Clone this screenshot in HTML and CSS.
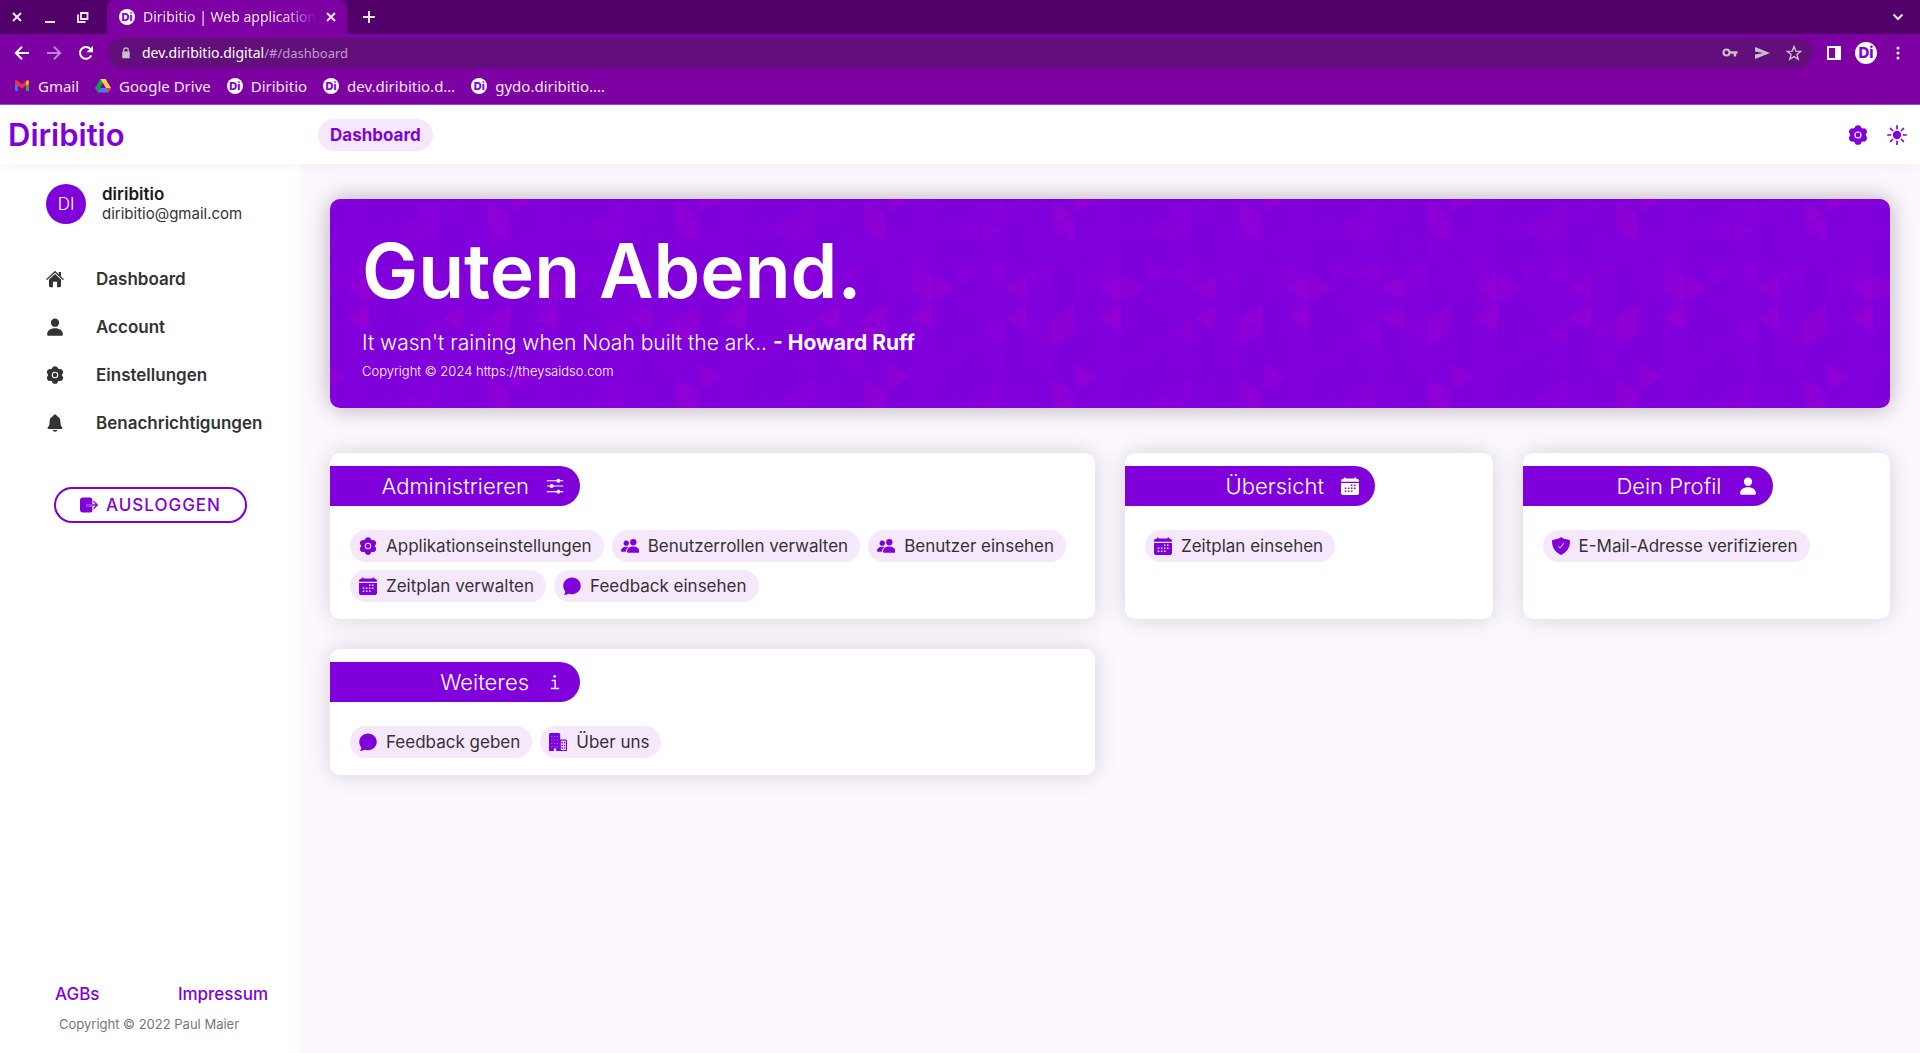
FILE: index.html
```html
<!DOCTYPE html>
<html lang="de">
<head>
<meta charset="utf-8">
<meta name="viewport" content="width=device-width, initial-scale=1">
<title>Diribitio | Web application</title>
<link rel="stylesheet" href="styles.css">
</head>
<body>
<svg class="sprite" aria-hidden="true">
  <symbol id="i-gear" viewBox="0 0 24 24">
    <circle cx="12" cy="12" r="9.6" fill="currentColor"/>
    <g stroke="currentColor" stroke-width="7.6" stroke-linecap="round" stroke-linejoin="round">
      <path d="M12 4v16M5.100 8l13.800 8M18.900 8L5.100 16"/>
    </g>
    <circle cx="12" cy="12" r="3.600" fill="none" stroke="var(--hole)" stroke-width="1.400"/>
  </symbol>
  <symbol id="i-sun" viewBox="0 0 24 24">
    <circle cx="12" cy="12" r="5" fill="currentColor"/>
    <path d="M12 1v3.4M12 19.6V23M1 12h3.4M19.600 12H23M4.200 4.200l2.400 2.400M17.400 17.400l2.400 2.400M4.200 19.800l2.400-2.400M17.400 6.600l2.400-2.400" stroke="currentColor" stroke-width="2" stroke-linecap="round"/>
  </symbol>
  <symbol id="i-home" viewBox="0 0 24 24">
    <path d="M1.300 12.300L12 2.300l10.700 10" fill="none" stroke="currentColor" stroke-width="1.700" stroke-linecap="round"/>
    <path d="M17 2.500h3v6.200l-3-2.800zM4 12.700l8-7.500 8 7.500V21a2 2 0 0 1-2 2h-3.200v-7.500H9.200V23H6a2 2 0 0 1-2-2z" fill="currentColor"/>
  </symbol>
  <symbol id="i-person" viewBox="0 0 24 24">
    <circle cx="12" cy="6.300" r="5.500" fill="currentColor"/>
    <path d="M1.500 21.500c0-5 4.500-8 10.500-8s10.500 3 10.500 8c0 1.300-.6 2-2 2h-17c-1.400 0-2-.7-2-2z" fill="currentColor"/>
  </symbol>
  <symbol id="i-bell" viewBox="0 0 24 24">
    <path d="M12 .8c1.400 0 2.300.8 2.600 2 3 1.200 4.600 4 4.600 7.200 0 4.400.6 5.600 2.300 7.600.8 1 .4 2.300-1 2.300h-17c-1.400 0-1.800-1.300-1-2.300 1.700-2 2.300-3.200 2.300-7.600 0-3.200 1.600-6 4.600-7.200.3-1.200 1.200-2 2.600-2zM8.800 21.300h6.400c-.4 1.400-1.600 2.200-3.200 2.200s-2.800-.8-3.200-2.200z" fill="currentColor"/>
  </symbol>
  <symbol id="i-logout" viewBox="0 0 24 24">
    <path d="M4 2h9a3.500 3.500 0 0 1 3.500 3.500v5H8v3h8.500v5A3.500 3.500 0 0 1 13 22H4a4 4 0 0 1-4-4V6a4 4 0 0 1 4-4z" fill="currentColor"/>
    <path d="M8 12h15M18.500 7.500L23 12l-4.500 4.500" fill="none" stroke="currentColor" stroke-width="1.800" stroke-linecap="round" stroke-linejoin="round"/>
  </symbol>
  <symbol id="i-sliders" viewBox="0 0 24 24">
    <path d="M1 5h22M1 12h22M1 19.500h22" stroke="currentColor" stroke-width="1.400"/>
    <g fill="currentColor"><circle cx="16.500" cy="5" r="2.600"/><circle cx="7.500" cy="12" r="2.600"/><circle cx="16.500" cy="19.500" r="2.600"/></g>
  </symbol>
  <symbol id="i-calendar" viewBox="0 0 24 24">
    <path d="M0 6.300V5.500C0 3.200 1.500 2 4 2V.7h2V2h12V.7h2V2c2.500 0 4 1.200 4 3.500v.8zM0 8h24v12.500c0 2.300-1.200 3.500-3.500 3.500h-17C1.200 24 0 22.800 0 20.500z" fill="currentColor"/>
    <g fill="var(--hole)"><path d="M13.300 10h2v2h-2zM17.300 10h2v2h-2zM5 14h2v2H5zM9.200 14h2v2h-2zM13.300 14h2v2h-2zM17.300 14h2v2h-2zM5 18h2v2H5zM9.200 18h2v2h-2zM13.300 18h2v2h-2z"/></g>
  </symbol>
  <symbol id="i-people" viewBox="0 0 24 24">
    <g fill="currentColor"><circle cx="16.400" cy="7" r="4.200"/><path d="M8 19.800c0-4.500 3.600-7 8.300-7s8.300 2.500 8.300 7c0 .8-.4 1.200-1.200 1.200H9.200c-.8 0-1.200-.4-1.200-1.200z"/><circle cx="7" cy="8.300" r="3.500"/><path d="M0 18.800c0-3.700 2.700-5.800 6.700-5.800 1.500 0 2.700.2 3.600.8-2.200 1.400-3.700 3.200-3.900 6H1c-.7 0-1-.3-1-1z"/></g>
  </symbol>
  <symbol id="i-chat" viewBox="0 0 24 24">
    <path d="M12 .5C5.500.5.300 5.500.300 11.700c0 3 1 5.300 2.600 7.200.3 1.600-.2 3-1.200 4-.3.500 0 1 .6 1 2 0 3.600-.5 5-1.500 1.500.4 3 .6 4.700.6 6.500 0 11.700-5 11.700-11.300S18.500.5 12 .5z" fill="currentColor"/>
  </symbol>
  <symbol id="i-shield" viewBox="0 0 24 24">
    <path d="M12 0c2 1.800 5.500 3.200 10 3.600 1.300.1 2 .7 2 2C24 14 20 20 12 24 4 20 0 14 0 5.600c0-1.300.7-1.900 2-2C6.500 3.200 10 1.800 12 0z" fill="currentColor"/>
    <path d="M8.500 12.500l2.300 2.300L15.500 8.500" fill="none" stroke="var(--hole)" stroke-width="1.300" stroke-linecap="round"/>
  </symbol>
  <symbol id="i-building" viewBox="0 0 24 24">
    <path d="M0 2.500C0 .9.900 0 2.500 0h9.800C14 0 15 .9 15 2.500V24H9.500v-3.500h-3V24H0z" fill="currentColor"/>
    <path d="M15 9.500h7.300c.6 0 1 .4 1 1V23.300H15z" fill="none" stroke="currentColor" stroke-width="1.500"/>
    <g fill="var(--hole)" opacity=".35"><path d="M3 4h1.500v1.500H3zM6.800 4h1.500v1.500H6.800zM10.500 4H12v1.500h-1.500zM3 8.500h1.500V10H3zM6.800 8.500h1.500V10H6.800zM10.500 8.500H12V10h-1.500zM3 13h1.500v1.500H3zM6.800 13h1.500v1.500H6.800zM10.500 13H12v1.500h-1.500zM3 17.500h1.500V19H3zM6.800 17.500h1.500V19H6.800zM10.500 17.500H12V19h-1.500z"/></g>
    <path d="M16.600 12h2v2h-2zM20 12h1.700v2H20zM16.600 15.500h2v2h-2zM20 15.500h1.700v2H20zM16.600 19h2v2h-2zM20 19h1.700v2H20z" fill="currentColor"/>
  </symbol>
  <symbol id="i-info" viewBox="0 0 24 24">
    <circle cx="11.500" cy="4.600" r="1.800" fill="currentColor"/>
    <path d="M7.500 10h4.700v10.500M6.500 20.700h11" fill="none" stroke="currentColor" stroke-width="1.900"/>
  </symbol>
  <symbol id="i-x" viewBox="0 0 16 16"><path d="M4 4l8 8M12 4l-8 8" stroke="currentColor" stroke-width="2"/></symbol>
</svg>

<div class="browser">
  <div class="tabstrip">
    <div class="window-controls">
      <button aria-label="Close window"><svg viewBox="0 0 16 16"><use href="#i-x"/></svg></button>
      <button aria-label="Minimize"><svg viewBox="0 0 16 16"><path d="M3 13h10" stroke="currentColor" stroke-width="2"/></svg></button>
      <button aria-label="Restore"><svg viewBox="0 0 16 16" fill="none" stroke="currentColor" stroke-width="1.800"><path d="M6 4h6.500v6H6zM3 5.500V13h7.500"/></svg></button>
    </div>
    <div class="tab">
      <span class="di">Di</span>
      <span class="tab-title">Diribitio | Web application</span>
      <button class="tab-close" aria-label="Close tab"><svg viewBox="0 0 16 16"><use href="#i-x"/></svg></button>
    </div>
    <button class="new-tab" aria-label="New tab"><svg viewBox="0 0 16 16"><path d="M8 2v12M2 8h12" stroke="currentColor" stroke-width="2"/></svg></button>
    <button class="tab-search" aria-label="Search tabs"><svg viewBox="0 0 16 16"><path d="M3.500 5.500L8 10l4.500-4.500" fill="none" stroke="currentColor" stroke-width="2"/></svg></button>
  </div>
  <div class="toolbar">
    <div class="toolbar-group">
      <button aria-label="Back"><svg viewBox="0 0 16 16" fill="none" stroke="currentColor" stroke-width="2"><path d="M15 8H2.500M8 1.800L1.800 8 8 14.200"/></svg></button>
      <button class="faded" aria-label="Forward"><svg viewBox="0 0 16 16" fill="none" stroke="currentColor" stroke-width="2"><path d="M1 8h12.500M8 1.800L14.200 8 8 14.200"/></svg></button>
      <button aria-label="Reload"><svg viewBox="0 0 16 16"><path d="M13.300 10.300A5.900 5.900 0 1 1 12.400 4" fill="none" stroke="currentColor" stroke-width="2"/><path d="M15 .8v6.400H8.600z" fill="currentColor"/></svg></button>
    </div>
    <div class="omnibox">
      <svg class="lock" viewBox="0 0 16 16"><path d="M3 6h10v9H3z" fill="currentColor"/><path d="M5 7V4.200a3 3 0 0 1 6 0V7" fill="none" stroke="currentColor" stroke-width="1.600"/></svg>
      <input class="url" type="text" aria-label="Address" value="dev.diribitio.digital"><span class="url-path">/#/dashboard</span>
      <div class="omni-actions">
        <button aria-label="Passwords"><svg viewBox="0 0 16 16"><circle cx="4.500" cy="7.500" r="3" fill="none" stroke="currentColor" stroke-width="2.200"/><path d="M8 6.200h7.500v2.600h-1.300v2.700h-2.500V8.800H8z" fill="currentColor"/></svg></button>
        <button aria-label="Share"><svg viewBox="0 0 16 16"><path d="M1 2l15 6-15 6V9.600L9 8 1 6.400z" fill="currentColor"/></svg></button>
        <button aria-label="Bookmark"><svg viewBox="0 0 16 16"><path d="M8 1.500l1.800 4.600 4.900.3-3.800 3.100 1.300 4.800L8 11.600l-4.200 2.700 1.300-4.800L1.300 6.400l4.900-.3z" fill="none" stroke="currentColor" stroke-width="1.400"/></svg></button>
      </div>
    </div>
    <div class="toolbar-group end">
      <button aria-label="Side panel"><svg viewBox="0 0 16 16"><path d="M1 1h14v14H1zM3 3v10h6V3z" fill="currentColor" fill-rule="evenodd"/></svg></button>
      <button class="di di-large" aria-label="Profile">Di</button>
      <button aria-label="Menu"><svg viewBox="0 0 16 16" fill="currentColor"><circle cx="8" cy="3" r="1.500"/><circle cx="8" cy="8" r="1.500"/><circle cx="8" cy="13" r="1.500"/></svg></button>
    </div>
  </div>
  <nav class="bookmarks" aria-label="Bookmarks">
    <a href="#"><svg viewBox="0 0 16 16"><path d="M1 13V4.500l3 2.300V13z" fill="#4f6bea"/><path d="M12 13V6.800l3-2.300V13z" fill="#34a853"/><path d="M1 5.300V3.600c0-1.300 1.400-1.600 2.300-1L8 6.200l4.700-3.600c.9-.6 2.300-.3 2.300 1v1.700L8 10.500z" fill="#ea3335"/><path d="M12 3.200c1-1 3-.9 3 .6v1.700l-3 2.200z" fill="#fbbc04"/></svg>Gmail</a>
    <a href="#"><svg viewBox="0 0 16 16"><path d="M5.400 1h5.200L5.300 10 2.700 14.600 0 10z" fill="#0f9d58"/><path d="M5.400 1h5.200L16 10h-5.300z" fill="#ffcf3f"/><path d="M5.300 10H16l-2.600 4.600H2.700z" fill="#4f7bf0"/><path d="M10.700 10H16l-2.600 4.600z" fill="#ea4335"/><path d="M8 5.300l2.700 4.700H5.300z" fill="#7d00a3"/></svg>Google Drive</a>
    <a href="#"><span class="di">Di</span>Diribitio</a>
    <a href="#"><span class="di">Di</span>dev.diribitio.d…</a>
    <a href="#"><span class="di">Di</span>gydo.diribitio.…</a>
  </nav>
</div>

<header class="app-bar">
  <a class="brand" href="#">Diribitio</a>
  <h2 class="page-chip">Dashboard</h2>
  <div class="app-actions">
    <button aria-label="Einstellungen"><svg><use href="#i-gear"/></svg></button>
    <button aria-label="Helles Design"><svg><use href="#i-sun"/></svg></button>
  </div>
</header>

<div class="app">
  <aside class="sidebar">
    <div class="user">
      <span class="avatar">DI</span>
      <div><div class="user-name">diribitio</div><div class="user-mail">diribitio@gmail.com</div></div>
    </div>
    <nav class="side-nav">
      <a href="#"><svg><use href="#i-home"/></svg>Dashboard</a>
      <a href="#"><svg><use href="#i-person"/></svg>Account</a>
      <a href="#"><svg><use href="#i-gear"/></svg>Einstellungen</a>
      <a href="#"><svg><use href="#i-bell"/></svg>Benachrichtigungen</a>
    </nav>
    <button class="logout"><svg><use href="#i-logout"/></svg>AUSLOGGEN</button>
    <footer class="side-footer">
      <div class="legal"><a href="#">AGBs</a><a href="#">Impressum</a></div>
      <p>Copyright © 2022 Paul Maier</p>
    </footer>
  </aside>

  <main class="content">
    <section class="banner">
      <svg class="banner-pattern" aria-hidden="true">
        <defs>
          <path id="r" d="M0-12.700L22 0 0 12.700z"/>
          <path id="l" d="M22-12.700L0 0l22 12.700z"/>
          <pattern id="triangles" width="188" height="178" patternUnits="userSpaceOnUse">
            <g fill="#ff00a0" opacity=".02">
              <path d="M17 0h22v178H17zM88 30h22v118H88zM135 60h22v100h-22z"/>
              <use href="#l" x="111" y="15"/><use href="#r" x="135" y="45"/><use href="#l" x="158" y="59"/>
              <use href="#r" x="41" y="163"/><use href="#l" x="64" y="104"/><use href="#r" x="111" y="104"/>
              <use href="#r" x="17" y="45"/><use href="#l" x="41" y="30"/><use href="#r" x="64" y="148"/>
            </g>
            <g fill="#ff00a0" opacity=".035">
              <use href="#r" x="111" y="74"/><use href="#l" x="88" y="163"/><use href="#l" x="135" y="163"/>
              <use href="#l" x="135" y="134"/><use href="#l" x="-6" y="74"/><use href="#l" x="182" y="74"/>
              <use href="#r" x="-6" y="89"/><use href="#r" x="182" y="89"/><use href="#l" x="135" y="74"/>
              <use href="#r" x="158" y="45"/><use href="#l" x="-6" y="45"/><use href="#l" x="182" y="45"/>
              <use href="#r" x="17" y="74"/><use href="#l" x="17" y="104"/>
            </g>
            <g fill="#ff00a0" opacity=".06">
              <use href="#r" x="64" y="74"/><use href="#l" x="88" y="74"/><use href="#l" x="88" y="15"/>
              <use href="#l" x="64" y="30"/><use href="#r" x="88" y="30"/><use href="#l" x="88" y="134"/>
            </g>
            <g fill="#ff00a0" opacity=".11">
              <use href="#r" x="158" y="15"/><use href="#l" x="158" y="30"/>
              <use href="#r" x="-6" y="0"/><use href="#r" x="-6" y="178"/><use href="#r" x="182" y="0"/><use href="#r" x="182" y="178"/>
              <use href="#l" x="17" y="89"/><use href="#r" x="41" y="89"/><use href="#l" x="111" y="89"/>
              <use href="#l" x="158" y="119"/><use href="#r" x="158" y="134"/><use href="#l" x="17" y="119"/><use href="#l" x="111" y="119"/>
            </g>
          </pattern>
        </defs>
        <rect width="100%" height="100%" fill="url(#triangles)"/>
      </svg>
      <h1>Guten Abend.</h1>
      <p class="quote">It wasn't raining when Noah built the ark.. <strong>- Howard Ruff</strong></p>
      <p class="credit">Copyright © 2024 https://theysaidso.com</p>
    </section>

    <div class="cards">
      <section class="card wide">
        <h2>Administrieren<svg><use href="#i-sliders"/></svg></h2>
        <div class="chips">
          <a href="#"><svg><use href="#i-gear"/></svg>Applikationseinstellungen</a>
          <a href="#"><svg><use href="#i-people"/></svg>Benutzerrollen verwalten</a>
          <a href="#"><svg><use href="#i-people"/></svg>Benutzer einsehen</a>
          <a href="#"><svg><use href="#i-calendar"/></svg>Zeitplan verwalten</a>
          <a href="#"><svg><use href="#i-chat"/></svg>Feedback einsehen</a>
        </div>
      </section>
      <section class="card">
        <h2>Übersicht<svg><use href="#i-calendar"/></svg></h2>
        <div class="chips"><a href="#"><svg><use href="#i-calendar"/></svg>Zeitplan einsehen</a></div>
      </section>
      <section class="card">
        <h2>Dein Profil<svg><use href="#i-person"/></svg></h2>
        <div class="chips"><a href="#"><svg><use href="#i-shield"/></svg>E-Mail-Adresse verifizieren</a></div>
      </section>
      <section class="card wide">
        <h2>Weiteres<svg><use href="#i-info"/></svg></h2>
        <div class="chips">
          <a href="#"><svg><use href="#i-chat"/></svg>Feedback geben</a>
          <a href="#"><svg><use href="#i-building"/></svg>Über uns</a>
        </div>
      </section>
    </div>
  </main>
</div>
</body>
</html>
```

FILE: styles.css
```css
:root {
  --violet: #8000dc;
  --tint: #f5e8fd;
  --ink: #333;
  --hole: #fff;
  --chrome: #7d00a3;
}

* { box-sizing: border-box; }

body {
  margin: 0;
  min-height: 100vh;
  display: flex;
  flex-direction: column;
  font: 17px/24px Inter, "Open Sans", sans-serif;
  color: var(--ink);
  background: #fdf8ff;
}

h1, h2, p { margin: 0; }
a { color: inherit; text-decoration: none; }
button { border: 0; padding: 0; background: none; color: inherit; font: inherit; cursor: pointer; }
svg { display: block; flex: none; }
.sprite { position: absolute; width: 0; height: 0; }

/* Browser window */
.browser {
  font: 14px/20px "Noto Sans", "Open Sans", sans-serif;
  color: #f3e9f7;
  background: var(--chrome);
  border-bottom: 1px solid #a64dc0;
}
.browser svg { width: 16px; height: 16px; }
.tabstrip { display: flex; align-items: center; height: 34px; padding-right: 14px; background: #51006a; }
.window-controls { display: flex; gap: 17px; width: 107px; padding-left: 9px; }
.tab {
  display: flex;
  align-items: center;
  width: 240px;
  height: 34px;
  padding: 0 8px 0 12px;
  border-radius: 8px 8px 0 0;
  background: var(--chrome);
}
.tab-title {
  flex: 1;
  min-width: 0;
  margin: 0 6px 0 8px;
  overflow: hidden;
  white-space: nowrap;
  mask-image: linear-gradient(to right, #000 80%, transparent);
}
.new-tab { margin-left: 14px; }
.tab-search { margin-left: auto; }
.di {
  display: inline-flex;
  align-items: center;
  justify-content: center;
  flex: none;
  width: 16px;
  height: 16px;
  border-radius: 50%;
  background: #fff;
  color: var(--violet);
  font: 800 11px/16px Inter, sans-serif;
}
.di-large { width: 22px; height: 22px; font-size: 15px; }
.toolbar { display: flex; align-items: center; gap: 14px; height: 38px; padding: 0 14px; color: #fff; }
.toolbar-group { display: flex; align-items: center; gap: 16px; }
.toolbar-group.end { gap: 13px; }
.faded { opacity: .5; }
.omnibox {
  flex: 1;
  display: flex;
  align-items: center;
  height: 30px;
  padding: 0 10px 0 12px;
  border-radius: 15px;
  background: #620f7c;
}
.browser .lock { width: 12px; height: 12px; margin-right: 10px; color: #c7bfcb; }
.url {
  field-sizing: content;
  border: 0;
  padding: 0;
  background: none;
  color: #fff;
  font: 14px/20px "Noto Sans", sans-serif;
}
.url-path { font-size: 13px; color: #c29ccd; }
.omni-actions { display: flex; flex: none; gap: 16px; margin-left: auto; color: #c7bfcb; }
.bookmarks { display: flex; gap: 16px; height: 32px; padding: 0 14px 4px; align-items: center; font-size: 15px; }
.bookmarks a { display: flex; align-items: center; gap: 8px; }

/* Application bar */
.app-bar {
  position: relative;
  display: flex;
  align-items: center;
  height: 59px;
  padding: 0 13px 0 8px;
  background: #fff;
  color: var(--violet);
  box-shadow: 0 0 16px rgba(0, 0, 0, .06);
}
.brand { width: 310px; font-size: 31px; line-height: 40px; font-weight: 600; }
.page-chip { padding: 4px 12px; border-radius: 16px; background: var(--tint); font-size: 17px; font-weight: 700; }
.app-actions { display: flex; gap: 19px; margin-left: auto; }
.app-actions svg { width: 20px; height: 20px; }

/* Shell */
.app { flex: 1; display: flex; }
.sidebar { display: flex; flex-direction: column; flex: none; width: 300px; padding: 20px 24px 19px 46px; background: #fff; }
.user { display: flex; align-items: center; gap: 16px; height: 40px; }
.avatar { width: 40px; border-radius: 50%; background: var(--violet); color: #fff; line-height: 40px; text-align: center; font-weight: 300; }
.user-name { line-height: 20px; font-weight: 600; color: #1a1a1a; }
.user-mail { font-size: 15px; line-height: 20px; }
.side-nav { margin-top: 31px; }
.side-nav a { display: flex; align-items: center; gap: 32px; height: 48px; font-weight: 600; }
.side-nav svg { width: 18px; height: 18px; }
.logout {
  display: flex;
  align-items: center;
  justify-content: center;
  gap: 8px;
  width: 193px;
  height: 36px;
  margin: 40px 0 0 8px;
  border: 2px solid var(--violet);
  border-radius: 18px;
  color: var(--violet);
  font-weight: 500;
  letter-spacing: 1px;
}
.logout svg { width: 18px; height: 18px; }
.side-footer { margin-top: auto; padding-left: 9px; }
.legal { display: flex; justify-content: space-between; padding-right: 8px; color: var(--violet); font-weight: 500; }
.side-footer p { padding-left: 4px; margin-top: 8px; font-size: 13px; line-height: 20px; color: #777; }

/* Page content */
.content { flex: 1; min-width: 0; padding: 35px 30px; }
.banner {
  position: relative;
  overflow: hidden;
  padding: 32px 32px 25px;
  border-radius: 10px;
  background: var(--violet);
  color: #fff;
  box-shadow: 0 0 24px rgba(0, 0, 0, .3);
}
.banner-pattern { position: absolute; inset: 0; width: 100%; height: 100%; }
.banner > :not(svg) { position: relative; }
.banner h1 { font-size: 75px; line-height: 80px; font-weight: 600; }
.quote { margin-top: 16px; font-size: 21px; line-height: 32px; font-weight: 300; }
.quote strong { font-weight: 700; }
.credit { font-size: 13px; line-height: 24px; font-weight: 300; }
.cards { display: grid; grid-template-columns: repeat(4, 1fr); gap: 30px; margin-top: 45px; }
.card { padding: 13px 20px 17px 0; border-radius: 10px; background: #fff; box-shadow: 0 0 24px rgba(0, 0, 0, .16); }
.wide { grid-column: span 2; }
.card h2 {
  --hole: var(--violet);
  display: flex;
  align-items: center;
  justify-content: flex-end;
  gap: 17px;
  width: 250px;
  height: 40px;
  padding-right: 16px;
  border-radius: 0 20px 20px 0;
  background: var(--violet);
  color: #fff;
  font-size: 22px;
  font-weight: 300;
}
.card svg { width: 18px; height: 18px; }
.chips { display: flex; flex-wrap: wrap; gap: 8px; margin-top: 24px; padding-left: 20px; }
.chips a {
  --hole: var(--tint);
  display: flex;
  align-items: center;
  gap: 9px;
  height: 32px;
  padding: 0 12px 0 9px;
  border-radius: 16px;
  background: var(--tint);
}
.chips svg { color: var(--violet); }
```
